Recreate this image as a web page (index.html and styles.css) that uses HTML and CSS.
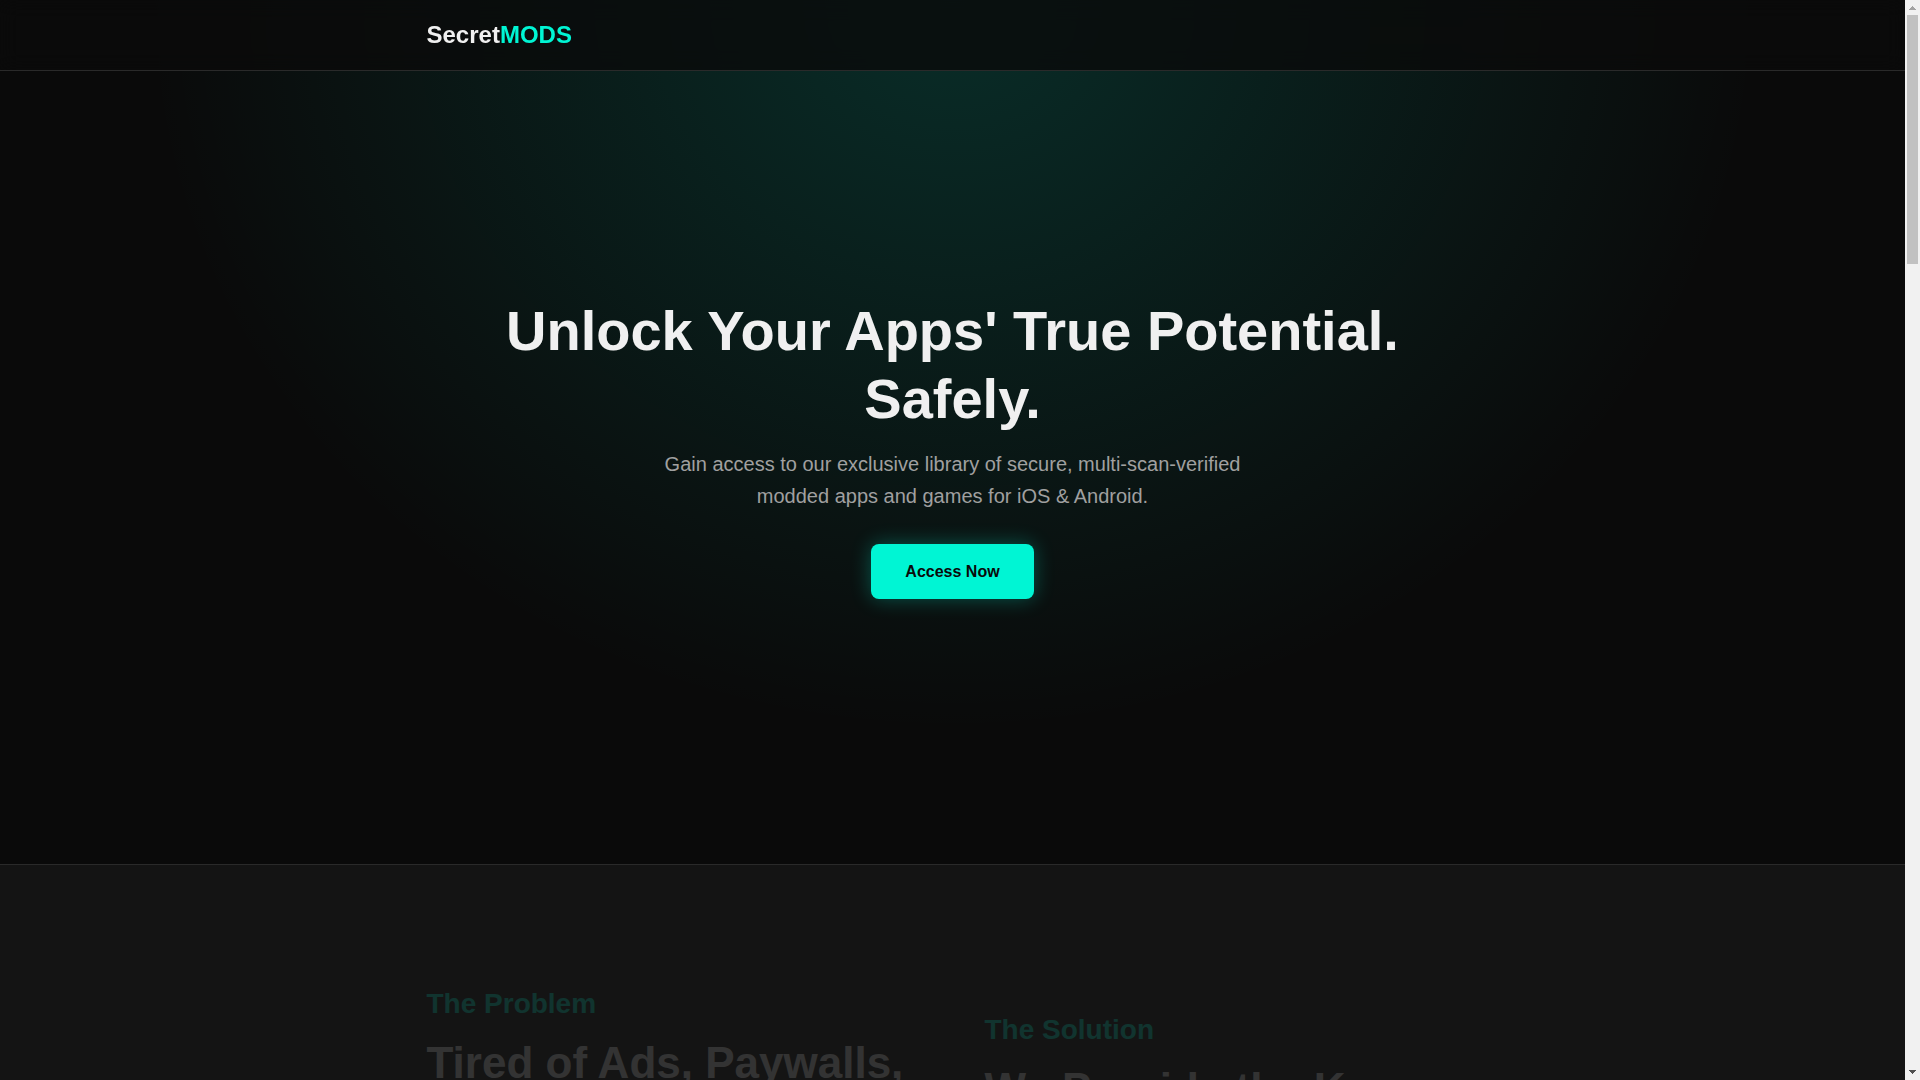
FILE: index.html
```
<!doctype html>
<html lang="en">

  <head>
    <title>SecretMODS</title>
    <meta charset="utf-8">
    <meta name="viewport" content="width=device-width, initial-scale=1" />
    <link rel="stylesheet" href="styles.css">
  </head>

  <body>

    <div class="page">
      <header class="header">
        <div class="container">
          <a class="logo" href="#">Secret<span>MODS</span></a>
        </div>
      </header>

      <main>
        <section class="hero">
          <div class="container">
            <h1>Unlock Your Apps' True Potential. Safely.</h1>
            <p>
              Gain access to our exclusive library of secure, multi-scan-verified
              modded apps and games for iOS &amp; Android.
            </p>
            <a class="cta-button" href="#access">Access Now</a>
          </div>
        </section>

        <section class="features">
          <div class="container features-grid">
            <div class="feature">
              <h3>The Problem</h3>
              <h2>Tired of Ads, Paywalls, and Limits?</h2>
            </div>
            <div class="feature">
              <h3>The Solution</h3>
              <h2>We Provide the Key.</h2>
            </div>
          </div>
        </section>
      </main>
    </div>

    <div class="scrollbar" aria-hidden="true">
      <svg class="scrollbar-arrow" width="15" height="15" viewBox="0 0 15 15" shape-rendering="crispEdges">
        <path fill="#a3a3a3" d="M7 6h1v1h1v1h1v1h1v1H4V9h1V8h1V7h1z" />
      </svg>
      <div class="scrollbar-thumb"></div>
      <svg class="scrollbar-arrow scrollbar-down" width="15" height="15" viewBox="0 0 15 15" shape-rendering="crispEdges">
        <path fill="#505050" d="M4 5h7v1h-1v1H9v1H8v1H7V8H6V7H5V6H4z" />
      </svg>
    </div>

  </body>

</html>
```

FILE: styles.css
```
:root {
  --background: #0a0a0a;
  --surface: #141414;
  --border: #2a2a2a;
  --accent: #00f5d4;
  --text: #f0f0f0;
  --text-muted: #a0a0a0;
}

* {
  box-sizing: border-box;
  margin: 0;
  padding: 0;
}

body {
  display: flex;
  height: 100vh;
  overflow: hidden;
  font-family: "Liberation Sans", Arial, sans-serif;
  line-height: 1.6;
  color: var(--text);
  background: var(--background);
}

.page {
  position: relative;
  flex: 1;
  min-width: 0;
  overflow: hidden;
}

.container {
  max-width: 1100px;
  margin: 0 auto;
  padding: 0 24px;
}

.header {
  position: absolute;
  top: 0;
  left: 0;
  width: 100%;
  z-index: 10;
  padding: 16px 0;
  background: rgba(10, 10, 10, 0.8);
  backdrop-filter: blur(10px);
  border-bottom: 1px solid var(--border);
}

.logo {
  display: block;
  font-size: 24px;
  line-height: 38px;
  font-weight: bold;
  color: var(--text);
  text-decoration: none;
}

.logo span {
  color: var(--accent);
}

.hero {
  display: flex;
  align-items: center;
  min-height: 80vh;
  padding: 96px 0 64px;
  text-align: center;
  background: radial-gradient(ellipse at top, rgba(0, 245, 212, 0.15), transparent 60%);
}

.hero h1 {
  margin-bottom: 16px;
  font-size: 56px;
  line-height: 1.2;
}

.hero p {
  max-width: 600px;
  margin: 0 auto 32px;
  font-size: 20px;
  color: var(--text-muted);
}

.cta-button {
  display: inline-block;
  padding: 15px 34px;
  font-size: 16px;
  line-height: 25px;
  font-weight: bold;
  color: var(--background);
  text-decoration: none;
  background: var(--accent);
  border-radius: 8px;
  box-shadow: 0 0 20px rgba(0, 245, 212, 0.3);
}

.features {
  padding: 116px 0 96px;
  background: var(--surface);
  border-top: 1px solid var(--border);
}

.features-grid {
  display: grid;
  grid-template-columns: 1fr 1fr;
  align-items: center;
  gap: 64px;
}

.feature {
  opacity: 0.14;
}

.feature h3 {
  margin-bottom: 11px;
  font-size: 28px;
  line-height: 45px;
  color: var(--accent);
}

.feature h2 {
  font-size: 44px;
  line-height: 1.2;
}

.scrollbar {
  display: flex;
  flex-direction: column;
  width: 15px;
  background: #f1f1f1;
}

.scrollbar-arrow {
  display: block;
}

.scrollbar-thumb {
  height: 249px;
  margin: 0 2px;
  background: #c1c1c1;
}

.scrollbar-down {
  margin-top: auto;
}

@media (max-width: 768px) {
  .features-grid {
    grid-template-columns: 1fr;
  }

  .hero h1 {
    font-size: 40px;
  }
}
```
